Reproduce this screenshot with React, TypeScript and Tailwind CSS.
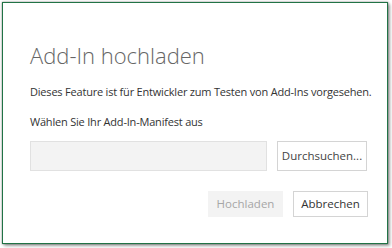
export default function App() {
  return (
    <div className="w-[392px] h-[248px] bg-white pt-[2px] pl-[2px] font-['Open_Sans',sans-serif]">
      <div className="w-[386px] h-[242px] border border-[#217346] bg-white shadow-[0_0_2px_rgba(0,0,0,0.45),2px_2px_3px_rgba(0,0,0,0.35)] flex flex-col pl-[27px] pr-[19px]">
        <h1 className="mt-[37px] text-[22px] font-light leading-[30px] text-[#666666]">Add-In hochladen</h1>
        <p className="mt-[14px] text-[11px] tracking-[-0.2px] leading-[16px] text-[#333333] whitespace-nowrap">
          Dieses Feature ist für Entwickler zum Testen von Add-Ins vorgesehen.
        </p>
        <p className="mt-[14px] text-[11px] tracking-[-0.2px] leading-[16px] text-[#333333]">
          Wählen Sie Ihr Add-In-Manifest aus
        </p>
        <div className="mt-[11px] flex gap-[10px]">
          <div className="w-[237px] h-[30px] bg-[#f3f3f3] border border-[#e1e1e1]" />
          <button className="w-[90px] h-[30px] bg-white border border-[#d4d4d4] text-[11.5px] text-[#444444]">
            Durchsuchen...
          </button>
        </div>
        <div className="mt-[20px] flex justify-end gap-[10px]">
          <button className="w-[75px] h-[26px] bg-[#f3f3f3] text-[11.5px] text-[#a6a6a6]">Hochladen</button>
          <button className="w-[75px] h-[26px] bg-white border border-[#d4d4d4] text-[11.5px] text-[#333333]">
            Abbrechen
          </button>
        </div>
      </div>
    </div>
  );
}
